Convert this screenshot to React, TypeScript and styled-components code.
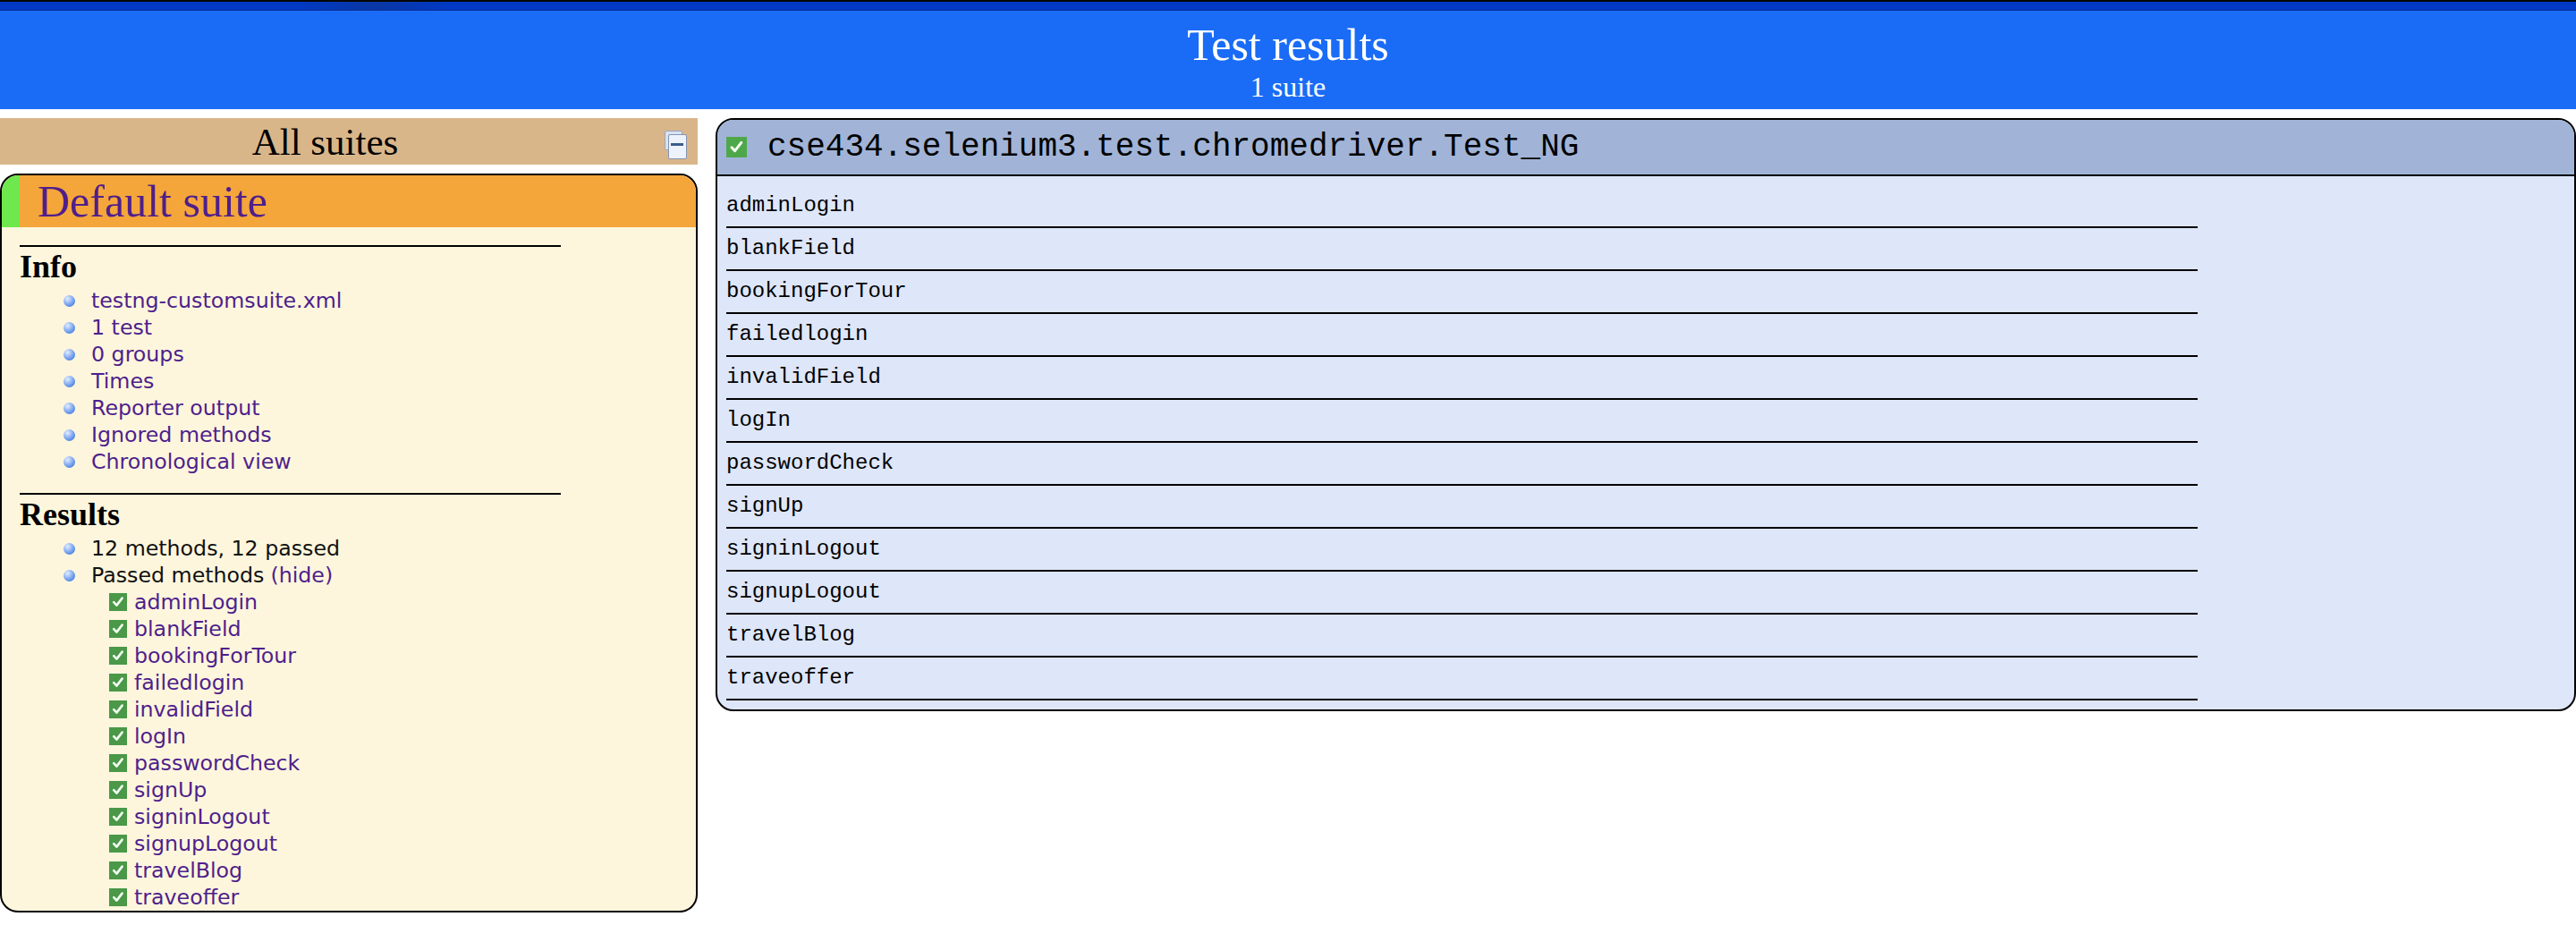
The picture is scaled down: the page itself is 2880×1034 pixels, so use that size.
import React from "react";
import styled, { createGlobalStyle } from "styled-components";

const GlobalStyle = createGlobalStyle`
  html, body { margin: 0; padding: 0; background: #ffffff; }
  body { font-family: "Liberation Serif", "Times New Roman", serif; }
`;

const Page = styled.div`
  width: 2880px;
  min-height: 1034px;
  display: flex;
  flex-direction: column;
`;

const TopStrip = styled.div`
  height: 9px;
  border-top: 2px solid #050505;
  border-bottom: 1px solid #0b2f96;
  background: linear-gradient(90deg, #0039c4 0%, #0039c4 11.5%, #0a37a4 14.5%, #0039c4 17.5%, #0039c4 100%);
`;

const Banner = styled.header`
  box-sizing: border-box;
  height: 110px;
  padding-top: 10px;
  background: #1a6cf6;
  color: #ffffff;
  text-align: center;
  font-family: "Liberation Serif", "Times New Roman", serif;
`;

const BannerTitle = styled.div`
  font-size: 50px;
  line-height: 57px;
`;

const BannerSub = styled.div`
  font-size: 32px;
  line-height: 37px;
`;

const Main = styled.main`
  display: grid;
  grid-template-columns: 800px 1fr;
  align-items: start;
  margin-top: 10px;
`;

const Navigator = styled.nav`
  display: flex;
  flex-direction: column;
  padding-right: 20px;
`;

const AllSuitesBar = styled.div`
  height: 52px;
  display: flex;
  align-items: center;
  background: #d9b68a;
`;

const AllSuitesTitle = styled.div`
  flex: 1;
  text-align: center;
  font-family: "Liberation Serif", "Times New Roman", serif;
  font-size: 43px;
  color: #000;
`;

const CollapseIcon = styled.svg`
  align-self: flex-start;
  margin: 14px 12px 0 16px;
  width: 25px;
  height: 33px;
`;

const SuiteBox = styled.section`
  margin-top: 10px;
  border: 2px solid #000;
  border-radius: 20px;
  background: #fdf6dd;
  overflow: hidden;
`;

const SuiteHeader = styled.div`
  height: 58px;
  line-height: 58px;
  background: #f4a63a;
  border-left: 20px solid #6ee84c;
  border-top-left-radius: 18px;
  padding-left: 20px;
  font-family: "Liberation Serif", "Times New Roman", serif;
  font-size: 50px;
  color: #4f1f8b;
`;

const SuiteContent = styled.div`
  margin-left: 20px;
`;

const SectionTitle = styled.div`
  margin-top: 20px;
  width: 80%;
  border-top: 2px solid #000;
  font-family: "Liberation Serif", "Times New Roman", serif;
  font-weight: bold;
  font-size: 36px;
  line-height: 45px;
  color: #000;
`;

const SectionList = styled.ul`
  margin: 0;
  padding: 0 0 0 80px;
  list-style: none;
  font-family: "DejaVu Sans", Verdana, sans-serif;
  font-size: 23.7px;
  line-height: 30px;
`;

const BulletRow = styled.div<{ $link?: boolean }>`
  display: flex;
  align-items: center;
  height: 30px;
  color: ${(p) => (p.$link ? "#4f1f8b" : "#111111")};
  &::before {
    content: "";
    flex: none;
    width: 13px;
    height: 13px;
    margin-left: -31px;
    margin-right: 18px;
    border-radius: 50%;
    background: radial-gradient(circle at 35% 30%, #e4eeff 0%, #9cbcf4 35%, #4f86e6 75%, #3a6dcc 100%);
  }
`;

const Hide = styled.span`
  color: #4f1f8b;
  margin-left: 0.3em;
`;

const MethodList = styled.ul`
  margin: 0 0 0 20px;
  padding: 0;
  list-style: none;
`;

const MethodItem = styled.li`
  display: flex;
  align-items: center;
  gap: 8px;
  height: 30px;
  color: #4f1f8b;
`;

const CheckSvg = styled.svg<{ $size: number }>`
  flex: none;
  width: ${(p) => p.$size}px;
  height: ${(p) => p.$size}px;
  display: block;
`;

const Panel = styled.section`
  border: 2px solid #000;
  border-radius: 20px;
  overflow: hidden;
  background: #dee6f9;
`;

const PanelHeader = styled.div`
  display: flex;
  align-items: center;
  gap: 23px;
  padding: 10px;
  background: #a1b4d7;
  border-bottom: 2px solid #000;
  font-family: "Liberation Mono", "Courier New", monospace;
  font-size: 36px;
  line-height: 41px;
  color: #000;
`;

const PanelContent = styled.div`
  padding: 10px;
`;

const MethodRow = styled.div`
  width: 80%;
  padding: 5px 0;
  border-bottom: 2px solid #000;
  font-family: "Liberation Mono", "Courier New", monospace;
  font-size: 24px;
  line-height: 36px;
  color: #000;
`;

const methods = [
  "adminLogin",
  "blankField",
  "bookingForTour",
  "failedlogin",
  "invalidField",
  "logIn",
  "passwordCheck",
  "signUp",
  "signinLogout",
  "signupLogout",
  "travelBlog",
  "traveoffer",
];

const infoItems = [
  "testng-customsuite.xml",
  "1 test",
  "0 groups",
  "Times",
  "Reporter output",
  "Ignored methods",
  "Chronological view",
];

function PassedIcon({ size, color }: { size: number; color: string }) {
  return (
    <CheckSvg $size={size} viewBox="0 0 20 20">
      <rect x="0" y="0" width="20" height="20" fill={color} />
      <path
        d="M5.2 10.2 L8.4 13.6 L14.6 5.6"
        fill="none"
        stroke="#f4fff2"
        strokeWidth="2.6"
        strokeLinecap="round"
        strokeLinejoin="round"
      />
    </CheckSvg>
  );
}

export default function App() {
  return (
    <Page>
      <GlobalStyle />
      <TopStrip />
      <Banner>
        <BannerTitle>Test results</BannerTitle>
        <BannerSub>1 suite</BannerSub>
      </Banner>
      <Main>
        <Navigator>
          <AllSuitesBar>
            <AllSuitesTitle>All suites</AllSuitesTitle>
            <CollapseIcon viewBox="0 0 25 33">
              <rect x="0.5" y="0.5" width="19" height="21" rx="1.5" fill="#d8e2f2" stroke="#97a6c4" />
              <rect x="4.5" y="4.5" width="20" height="27" rx="1.5" fill="#eef3fb" stroke="#8494b6" />
              <rect x="7" y="14" width="14" height="3" fill="#3d5d8d" />
            </CollapseIcon>
          </AllSuitesBar>
          <SuiteBox>
            <SuiteHeader>Default suite</SuiteHeader>
            <SuiteContent>
              <SectionTitle>Info</SectionTitle>
              <SectionList>
                {infoItems.map((t) => (
                  <li key={t}>
                    <BulletRow $link>{t}</BulletRow>
                  </li>
                ))}
              </SectionList>
              <SectionTitle>Results</SectionTitle>
              <SectionList>
                <li>
                  <BulletRow>12 methods, 12 passed</BulletRow>
                </li>
                <li>
                  <BulletRow>
                    Passed methods<Hide>(hide)</Hide>
                  </BulletRow>
                  <MethodList>
                    {methods.map((m) => (
                      <MethodItem key={m}>
                        <PassedIcon size={20} color="#4a9848" />
                        {m}
                      </MethodItem>
                    ))}
                  </MethodList>
                </li>
              </SectionList>
            </SuiteContent>
          </SuiteBox>
        </Navigator>
        <Panel>
          <PanelHeader>
            <PassedIcon size={23} color="#4ea84a" />
            cse434.selenium3.test.chromedriver.Test_NG
          </PanelHeader>
          <PanelContent>
            {methods.map((m) => (
              <MethodRow key={m}>{m}</MethodRow>
            ))}
          </PanelContent>
        </Panel>
      </Main>
    </Page>
  );
}
